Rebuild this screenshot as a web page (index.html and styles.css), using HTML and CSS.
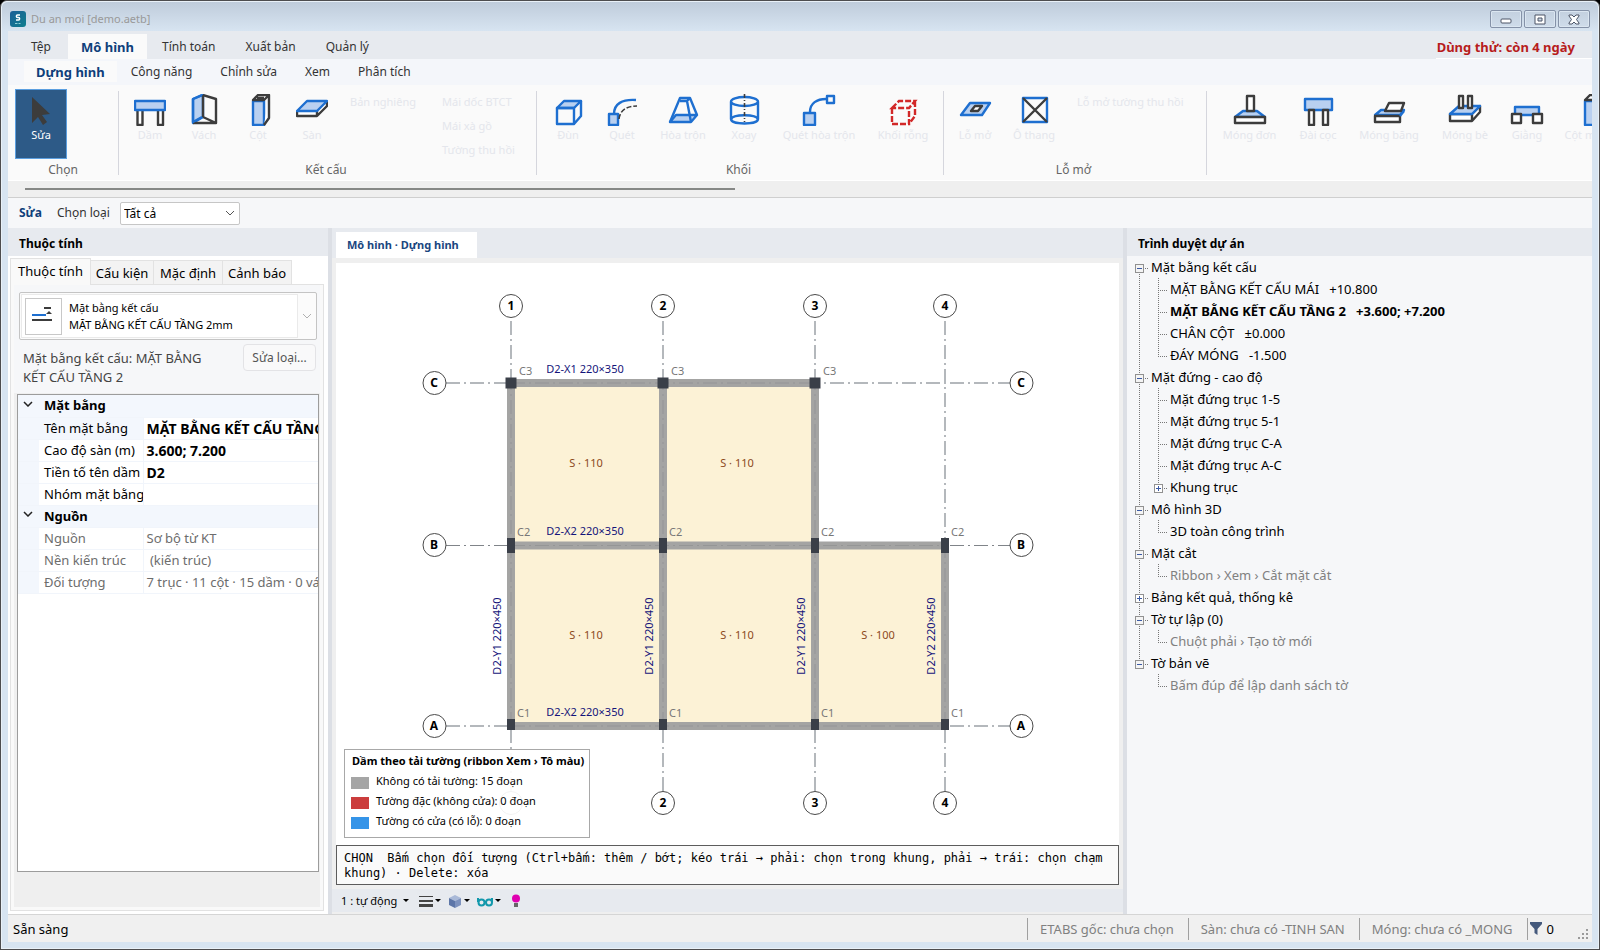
FILE: index.html
```html
<!DOCTYPE html>
<html lang="vi">
<head>
<meta charset="utf-8">
<title>Du an moi [demo.aetb]</title>
<link rel="stylesheet" href="styles.css">
</head>
<body>
<div class="window">
  <header class="titlebar">
    <svg class="app-logo" width="16" height="16" viewBox="0 0 16 16" aria-hidden="true">
      <defs><linearGradient id="lg" x1="0" y1="0" x2="1" y2="1"><stop offset="0" stop-color="#1c5f97"/><stop offset="1" stop-color="#0f7f8e"/></linearGradient></defs>
      <rect width="16" height="16" rx="3" fill="url(#lg)"/>
      <path d="M10 4H7.500C6 4 6 6.500 7.500 6.500H8.500C10 6.500 10 9 8.500 9H6" fill="none" stroke="#fff" stroke-width="1.500"/>
      <path d="M5 12.500h2.500M8.500 12.500h2" stroke="#8fd0d8"/>
    </svg>
    <h1 class="title">Du an moi [demo.aetb]</h1>
    <div class="caption-buttons">
      <button class="caption" type="button" aria-label="Minimize"><svg width="14" height="14" viewBox="0 0 14 14"><rect x="2" y="7" width="10" height="4" rx="1" fill="#fff" stroke="#4c5566"/></svg></button>
      <button class="caption" type="button" aria-label="Restore"><svg width="14" height="14" viewBox="0 0 14 14"><path d="M2 3h10v9H2zM5 6v3h4V6z" fill="#fff" fill-rule="evenodd" stroke="#4c5566"/></svg></button>
      <button class="caption" type="button" aria-label="Close"><svg width="14" height="14" viewBox="0 0 14 14"><path d="M2 3h3l2 2 2-2h3v1L9.500 7.500 12 11v1H9L7 10l-2 2H2v-1l2.500-3.500L2 4z" fill="#fff" stroke="#4c5566"/></svg></button>
    </div>
  </header>

  <main class="client">
    <nav class="tabs-main">
      <button class="tab first" type="button">Tệp</button>
      <button class="tab active" type="button">Mô hình</button>
      <button class="tab" type="button">Tính toán</button>
      <button class="tab" type="button">Xuất bản</button>
      <button class="tab" type="button">Quản lý</button>
      <strong class="trial">Dùng thử: còn 4 ngày</strong>
    </nav>
    <nav class="tabs-sub">
      <button class="subtab active" type="button">Dựng hình</button>
      <button class="subtab" type="button">Công năng</button>
      <button class="subtab" type="button">Chỉnh sửa</button>
      <button class="subtab" type="button">Xem</button>
      <button class="subtab" type="button">Phân tích</button>
    </nav>

    <div class="ribbon">
      <section class="group g-select">
        <div class="tools">
          <button class="tool selected" type="button">
            <svg width="32" height="32" viewBox="0 0 32 32"><path d="M7 3v26l6-6 5 8 4-3-5-7 8-1z" fill="#3c3c3c"/></svg>Sửa</button>
        </div>
        <h2>Chọn</h2>
      </section>
      <section class="group g-struct">
        <div class="tools">
          <button class="tool" type="button"><svg width="32" height="32" viewBox="0 0 32 32"><g class="dk"><rect x="3.500" y="15" width="5" height="16"/><rect x="24" y="15" width="5" height="16"/></g><rect class="bf" x="1" y="7" width="30" height="9"/></svg>Dầm</button>
          <button class="tool" type="button"><svg width="32" height="32" viewBox="0 0 32 32"><path class="bf" d="M5 5 15 1V23L5 29z"/><path class="dk n" d="M15 1 28 5V29L15 23M28 29H5M15 1V23"/><path class="b n" d="M14 1 5 5V28L14 23"/></svg>Vách</button>
          <button class="tool" type="button"><svg width="32" height="32" viewBox="0 0 32 32"><rect class="bf" x="11" y="7" width="11" height="24"/><path class="dk" d="M11 6 16 1H27L22 6zM15 4h7M27 1V24L22 31"/></svg>Cột</button>
          <button class="tool" type="button"><svg width="32" height="32" viewBox="0 0 32 32"><path class="dk" d="M1 17V22H21L31 12V7M21 17V22"/><path class="bf" d="M1 17 11 7H31L21 17z"/></svg>Sàn</button>
          <div class="stack"><button class="link" type="button">Bản nghiêng</button></div>
          <div class="stack"><button class="link" type="button">Mái dốc BTCT</button><button class="link" type="button">Mái xà gồ</button><button class="link" type="button">Tường thu hồi</button></div>
        </div>
        <h2>Kết cấu</h2>
      </section>
      <section class="group g-solid">
        <div class="tools">
          <button class="tool" type="button"><svg width="32" height="32" viewBox="0 0 32 32"><path class="bf" d="M5 14 12 7H29L22 14z"/><path class="b n" d="M5 14H22V30H5zM29 7V22L22 30"/></svg>Đùn</button>
          <button class="tool" type="button"><svg width="32" height="32" viewBox="0 0 32 32"><rect class="bf" x="3" y="20" width="9" height="11"/><path class="b n" d="M8 20C8 10 16 5 30 6"/><path class="dk n thin" stroke-dasharray="5 2" d="M13 25C14 16 21 12 31 12"/></svg>Quét</button>
          <button class="tool w68" type="button"><svg width="32" height="32" viewBox="0 0 32 32"><path class="bf" d="M3 28 9 21H30L24 28z"/><path class="b n" d="M3 28 13 4H23L30 21M24 28 20 7H13M20 7 23 4"/></svg>Hòa trộn</button>
          <button class="tool" type="button"><svg width="32" height="32" viewBox="0 0 32 32"><path class="b n" d="M3 8V25C3 31 30 31 30 25V8"/><ellipse class="b n" cx="16.500" cy="7.500" rx="13.500" ry="4.500"/><path class="b n" d="M3 25C5 20 28 20 30 25"/><path class="dk n thin" stroke-dasharray="4 2 1 2" d="M16.500 0V28"/></svg>Xoay</button>
          <button class="tool w96" type="button"><svg width="34" height="32" viewBox="0 0 34 32"><rect class="bf" x="2" y="19" width="11" height="12"/><path class="b n" d="M8 18C8 9 15 5 24 5"/><rect class="b n" x="25" y="2" width="7" height="7"/></svg>Quét hòa trộn</button>
          <button class="tool w72" type="button"><svg width="32" height="32" viewBox="0 0 32 32"><path d="M5 14 12 7H28L22 14zM5 14V30H22V14M28 7V22L22 30" fill="none" stroke="#d22828" stroke-width="2.400" stroke-dasharray="6 2"/></svg>Khối rỗng</button>
        </div>
        <h2>Khối</h2>
      </section>
      <section class="group g-open">
        <div class="tools">
          <button class="tool" type="button"><svg width="34" height="32" viewBox="0 0 34 32"><path class="bf" d="M3 21 12 9H32L24 21z"/><path class="dk" d="M13 17 17 12H24L20 17z"/></svg>Lỗ mở</button>
          <button class="tool w64" type="button"><svg width="32" height="32" viewBox="0 0 32 32"><rect class="b n" x="5" y="4" width="24" height="24"/><path class="dk n" d="M5 4 29 28M29 4 5 28"/></svg>Ô thang</button>
          <div class="stack"><button class="link" type="button">Lỗ mở tường thu hồi</button></div>
        </div>
        <h2>Lỗ mở</h2>
      </section>
      <section class="group g-found">
        <div class="tools">
          <button class="tool w77" type="button"><svg width="34" height="32" viewBox="0 0 34 32"><path class="bf" d="M2 23 10 17H24L32 23z"/><rect class="dk" x="2" y="23" width="30" height="6"/><rect class="dk" x="14" y="2" width="7" height="15"/></svg>Móng đơn</button>
          <button class="tool w60" type="button"><svg width="34" height="32" viewBox="0 0 34 32"><rect class="bf" x="4" y="5" width="27" height="11"/><rect class="dk" x="8" y="16" width="5" height="15"/><rect class="dk" x="22" y="16" width="5" height="15"/></svg>Đài cọc</button>
          <button class="tool w82" type="button"><svg width="34" height="32" viewBox="0 0 34 32"><path class="bf" d="M3 21 9 16H32L28 21z"/><path class="dk" d="M3 22H28V28H3zM13 17 17 9H32L29 17z"/><path class="b n" d="M28 22 32 17"/></svg>Móng băng</button>
          <button class="tool w70" type="button"><svg width="34" height="32" viewBox="0 0 34 32"><path class="dk" d="M2 20V27H24L32 18V12L24 20zM24 20V27"/><path class="bf" d="M2 20 11 12H32L24 20z"/><rect class="dk" x="11" y="2" width="4" height="12"/><rect class="dk" x="20" y="2" width="4" height="12"/></svg>Móng bè</button>
          <button class="tool" type="button"><svg width="34" height="32" viewBox="0 0 34 32"><rect class="bf" x="5" y="13" width="24" height="8"/><rect class="dk" x="2" y="20" width="9" height="9"/><rect class="dk" x="23" y="20" width="9" height="9"/></svg>Giằng</button>
          <button class="tool w72" type="button"><svg width="32" height="32" viewBox="0 0 32 32"><rect class="bf" x="11" y="7" width="11" height="24"/><path class="dk" d="M11 6 16 1H27L22 6zM27 1V24L22 31"/></svg>Cột móng</button>
        </div>
      </section>
    </div>
    <div class="ribbon-scroll"><div class="thumb"></div></div>

    <div class="optionbar">
      <strong>Sửa</strong>
      <label for="kind">Chọn loại</label>
      <select id="kind"><option>Tất cả</option></select>
    </div>

    <div class="workspace">
      <aside class="props">
        <h2 class="panel-head">Thuộc tính</h2>
        <div class="ptabs">
          <button class="ptab active" type="button">Thuộc tính</button>
          <button class="ptab w63" type="button">Cấu kiện</button>
          <button class="ptab" type="button">Mặc định</button>
          <button class="ptab" type="button">Cảnh báo</button>
        </div>
        <div class="page">
          <div class="type-area">
            <button class="type-picker" type="button">
              <span class="type-item">
                <span class="thumbnail"><svg width="24" height="20" viewBox="0 0 24 20"><path d="M0 14h20M12 2h7" stroke="#3c3c3c" stroke-width="2"/><path d="M0 9h14" stroke="#1e6fd0" stroke-width="2"/><path d="M14 8h6l-3-3z" fill="#3c3c3c"/></svg></span>
                <span class="type-text">Mặt bằng kết cấu<br>MẶT BẰNG KẾT CẤU TẦNG 2mm</span>
              </span>
              <svg class="chev" width="10" height="6" viewBox="0 0 10 6"><path d="M1 1l4 4 4-4" fill="none" stroke="#b0b0b0"/></svg>
            </button>
            <div class="type-row">
              <p>Mặt bằng kết cấu: MẶT BẰNG KẾT CẤU TẦNG 2</p>
              <button class="edit-type" type="button">Sửa loại...</button>
            </div>
          </div>
          <div class="grid-box">
            <table class="pgrid">
              <colgroup><col class="c0"><col class="c1"><col></colgroup>
              <tbody>
                <tr class="cat"><td><button type="button" aria-label="Thu gọn"><svg width="10" height="6" viewBox="0 0 10 6"><path d="M1 1l4 4 4-4" fill="none" stroke="#222" stroke-width="1.500"/></svg></button></td><th colspan="2">Mặt bằng</th></tr>
                <tr class="sel"><td></td><td>Tên mặt bằng</td><td class="v">MẶT BẰNG KẾT CẤU TẦNG 2</td></tr>
                <tr><td></td><td>Cao độ sàn (m)</td><td class="v">3.600; 7.200</td></tr>
                <tr><td></td><td>Tiền tố tên dầm</td><td class="v">D2</td></tr>
                <tr><td></td><td>Nhóm mặt bằng</td><td class="v"></td></tr>
                <tr class="cat"><td><button type="button" aria-label="Thu gọn"><svg width="10" height="6" viewBox="0 0 10 6"><path d="M1 1l4 4 4-4" fill="none" stroke="#222" stroke-width="1.500"/></svg></button></td><th colspan="2">Nguồn</th></tr>
                <tr class="ro"><td></td><td>Nguồn</td><td>Sơ bộ từ KT</td></tr>
                <tr class="ro"><td></td><td>Nền kiến trúc</td><td>&nbsp;(kiến trúc)</td></tr>
                <tr class="ro"><td></td><td>Đối tượng</td><td>7 trục · 11 cột · 15 dầm · 0 vách</td></tr>
              </tbody>
            </table>
          </div>
        </div>
      </aside>

      <section class="center">
        <div class="doc-tabs"><button class="doc-tab" type="button">Mô hình · Dựng hình</button></div>
        <div class="canvas-wrap">
          <svg class="plan" viewBox="336 263 783 582">
            <g fill="#fcf2d6">
              <path d="M511 383H815V545H945V726H511z"/>
            </g>
            <g class="axis">
              <path d="M511 791V318M663 791V318M815 791V318M945 791V318"/>
              <path d="M446 383H1010M446 726H1010"/><path class="ax-b" d="M446 545.500H1010"/>
            </g>
            <g class="beam">
              <path d="M511 383H815M511 545.500H945M511 726H945M511 383V726M663 383V726M815 383V726M945 545V726"/>
            </g>
            <g class="axis faint">
              <path d="M511 726V383M663 726V383M815 726V383M945 726V545M511 383H815M511 545.500H945M511 726H945"/>
            </g>
            <g fill="#3a3f48">
              <path d="M505.500 377.500h11v11h-11zM657.500 377.500h11v11h-11zM809.500 377.500h11v11h-11z"/>
              <path d="M507 538h8v15h-8zM659 538h8v15h-8zM811 538h8v15h-8zM941 538h8v15h-8z"/>
              <path d="M507 719h8v11h-8zM659 719h8v11h-8zM811 719h8v11h-8zM941 719h8v11h-8z"/>
            </g>
            <g class="bubble">
              <circle cx="511" cy="306" r="11.500"/><circle cx="663" cy="306" r="11.500"/><circle cx="815" cy="306" r="11.500"/><circle cx="945" cy="306" r="11.500"/>
              <circle cx="511" cy="803" r="11.500"/><circle cx="663" cy="803" r="11.500"/><circle cx="815" cy="803" r="11.500"/><circle cx="945" cy="803" r="11.500"/>
              <circle cx="434.500" cy="383" r="11.500"/><circle cx="434.500" cy="545" r="11.500"/><circle cx="434.500" cy="726" r="11.500"/>
              <circle cx="1021.500" cy="383" r="11.500"/><circle cx="1021.500" cy="545" r="11.500"/><circle cx="1021.500" cy="726" r="11.500"/>
            </g>
            <g class="mark">
              <text x="511" y="310">1</text><text x="663" y="310">2</text><text x="815" y="310">3</text><text x="945" y="310">4</text>
              <text x="663" y="807">2</text><text x="815" y="807">3</text><text x="945" y="807">4</text>
              <text x="434" y="387">C</text><text x="434" y="549">B</text><text x="434" y="730">A</text>
              <text x="1021" y="387">C</text><text x="1021" y="549">B</text><text x="1021" y="730">A</text>
            </g>
            <g class="col">
              <text x="519" y="375">C3</text><text x="671" y="375">C3</text><text x="823" y="375">C3</text>
              <text x="517" y="536">C2</text><text x="669" y="536">C2</text><text x="821" y="536">C2</text><text x="951" y="536">C2</text>
              <text x="517" y="717">C1</text><text x="669" y="717">C1</text><text x="821" y="717">C1</text><text x="951" y="717">C1</text>
            </g>
            <g class="bm">
              <text x="585" y="373">D2-X1 220×350</text><text x="585" y="535">D2-X2 220×350</text><text x="585" y="716">D2-X2 220×350</text>
              <text transform="translate(501 636) rotate(-90)">D2-Y1 220×450</text>
              <text transform="translate(653 636) rotate(-90)">D2-Y1 220×450</text>
              <text transform="translate(805 636) rotate(-90)">D2-Y1 220×450</text>
              <text transform="translate(935 636) rotate(-90)">D2-Y2 220×450</text>
            </g>
            <g class="slab">
              <text x="586" y="467">S · 110</text><text x="737" y="467">S · 110</text>
              <text x="586" y="639">S · 110</text><text x="737" y="639">S · 110</text><text x="878" y="639">S · 100</text>
            </g>
          </svg>
          <div class="legend">
            <h3>Dầm theo tải tường (ribbon Xem › Tô màu)</h3>
            <ul>
              <li><i class="sw gray"></i>Không có tải tường: 15 đoạn</li>
              <li><i class="sw red"></i>Tường đặc (không cửa): 0 đoạn</li>
              <li><i class="sw blue"></i>Tường có cửa (có lỗ): 0 đoạn</li>
            </ul>
          </div>
        </div>
        <p class="command">CHỌN  Bấm chọn đối tượng (Ctrl+bấm: thêm / bớt; kéo trái → phải: chọn trong khung, phải → trái: chọn chạm khung) · Delete: xóa</p>
        <div class="viewbar">
          <button class="scale" type="button">1 : tự động <i class="dd"></i></button>
          <button type="button" aria-label="Nét"><svg width="14" height="14" viewBox="0 0 14 14"><path d="M0 2.500h14" stroke="#444"/><path d="M0 7h14" stroke="#444" stroke-width="2"/><path d="M0 11.500h14" stroke="#444" stroke-width="3"/></svg><i class="dd"></i></button>
          <button type="button" aria-label="Hiển thị"><svg width="14" height="14" viewBox="0 0 14 14"><path d="M7 1l6 3-6 3-6-3z" fill="#a9b9d8"/><path d="M1 4l6 3v7l-6-3z" fill="#5d76a8"/><path d="M13 4L7 7v7l6-3z" fill="#7d92be"/></svg><i class="dd"></i></button>
          <button type="button" aria-label="Ẩn hiện"><svg width="16" height="14" viewBox="0 0 16 14"><g fill="none" stroke="#1298ac" stroke-width="2"><circle cx="4.500" cy="8.500" r="3"/><circle cx="12" cy="8.500" r="3"/><path d="M1 8V4M7 8h2M15 8V4"/></g></svg><i class="dd"></i></button>
          <button class="bulb" type="button" aria-label="Bật sáng"><svg width="10" height="14" viewBox="0 0 10 14"><circle cx="5" cy="4.500" r="4" fill="#e000b0"/><path d="M3 9h4v4H3z" fill="#666"/></svg></button>
        </div>
      </section>

      <aside class="browser">
        <h2 class="panel-head">Trình duyệt dự án</h2>
        <ul class="tree">
          <li><b class="node first open"><button type="button" aria-label="Thu gọn"></button></b>Mặt bằng kết cấu</li>
          <li><b class="rail"></b><b class="leaf"></b><span>MẶT BẰNG KẾT CẤU MÁI   +10.800</span></li>
          <li><b class="rail"></b><b class="leaf"></b><strong>MẶT BẰNG KẾT CẤU TẦNG 2   +3.600; +7.200</strong></li>
          <li><b class="rail"></b><b class="leaf"></b><span>CHÂN CỘT   ±0.000</span></li>
          <li><b class="rail"></b><b class="leaf end"></b><span>ĐÁY MÓNG   -1.500</span></li>
          <li><b class="node open"><button type="button" aria-label="Thu gọn"></button></b>Mặt đứng - cao độ</li>
          <li><b class="rail"></b><b class="leaf"></b>Mặt đứng trục 1-5</li>
          <li><b class="rail"></b><b class="leaf"></b>Mặt đứng trục 5-1</li>
          <li><b class="rail"></b><b class="leaf"></b>Mặt đứng trục C-A</li>
          <li><b class="rail"></b><b class="leaf"></b>Mặt đứng trục A-C</li>
          <li><b class="rail"></b><b class="node last"><button type="button" aria-label="Mở rộng"></button></b>Khung trục</li>
          <li><b class="node open"><button type="button" aria-label="Thu gọn"></button></b>Mô hình 3D</li>
          <li><b class="rail"></b><b class="leaf end"></b>3D toàn công trình</li>
          <li><b class="node open"><button type="button" aria-label="Thu gọn"></button></b>Mặt cắt</li>
          <li class="hint"><b class="rail"></b><b class="leaf end"></b>Ribbon › Xem › Cắt mặt cắt</li>
          <li><b class="node"><button type="button" aria-label="Mở rộng"></button></b>Bảng kết quả, thống kê</li>
          <li><b class="node open"><button type="button" aria-label="Thu gọn"></button></b>Tờ tự lập (0)</li>
          <li class="hint"><b class="rail"></b><b class="leaf end"></b>Chuột phải › Tạo tờ mới</li>
          <li><b class="node last open"><button type="button" aria-label="Thu gọn"></button></b>Tờ bản vẽ</li>
          <li class="hint"><b class="rail off"></b><b class="leaf end"></b>Bấm đúp để lập danh sách tờ</li>
        </ul>
      </aside>
    </div>

    <footer class="status">
      <span class="ready">Sẵn sàng</span>
      <span class="cell">ETABS gốc: chưa chọn</span>
      <span class="cell">Sàn: chưa có -TINH SAN</span>
      <span class="cell">Móng: chưa có _MONG</span>
      <button class="filter" type="button"><svg width="12" height="13" viewBox="0 0 12 13"><path d="M0 0h12v2L7.500 7v6L4.500 11V7L0 2z" fill="#44597c"/></svg>0</button>
      <svg class="grip" width="12" height="12" viewBox="0 0 12 12"><path d="M8 0h2v2H8zM8 4h2v2H8zM4 4h2v2H4zM8 8h2v2H8zM4 8h2v2H4zM0 8h2v2H0z" fill="#9a9a9a"/></svg>
    </footer>
  </main>
</div>
</body>
</html>
```
FILE: styles.css
```css
* { box-sizing: border-box; }
html, body { height: 100%; }
body {
  margin: 0;
  background: #000;
  font: 13px/22px "Noto Sans", "Open Sans", sans-serif;
  color: #000;
}
button, select { font: inherit; color: inherit; }
button { margin: 0; padding: 0; border: 0; background: none; white-space: nowrap; }
h1, h2, h3, p, ul { margin: 0; padding: 0; list-style: none; font-weight: normal; }
i, b { font-style: normal; font-weight: normal; }
svg { display: block; flex: none; }

.window {
  display: flex;
  flex-direction: column;
  height: 100vh;
  padding: 0 7px 7px 7px;
  border: 1px solid #4d4d4f;
  border-radius: 7px 7px 0 0;
  background: #d7e4f1;
  box-shadow: inset 0 0 0 1px #e9f1f8;
}
.titlebar {
  display: flex;
  align-items: center;
  flex: none;
  height: 30px;
  margin: 0 -6px;
  padding: 4px 8px 0;
  border-top: 1px solid #e9f1f8;
  border-radius: 6px 6px 0 0;
  background: linear-gradient(#bfccdb, #d7e4f1);
}
.title { margin-left: 5px; font-size: 11px; color: #999; line-height: 20px; }
.caption-buttons { display: flex; gap: 2px; margin-left: auto; }
.caption {
  display: flex;
  align-items: center;
  justify-content: center;
  width: 32px;
  height: 18px;
  border: 1px solid #8592a8;
  border-radius: 2px;
  background: linear-gradient(#c3d0df, #cfdcea);
  box-shadow: inset 0 0 0 1px #dbe6f1;
}
.client { display: flex; flex-direction: column; flex: 1; min-height: 0; background: #f6f7f9; }

.tabs-main { display: flex; align-items: flex-end; flex: none; height: 28px; padding-left: 6px; background: #e7eaef; }
.tab { height: 25px; padding: 0 15px; font-size: 12px; color: #333; }
.tab.first { width: 54px; padding: 0; }
.tab.active { padding: 0 13px; background: #fafafa; color: #0f3f7a; font-size: 13px; font-weight: bold; }
.trial { height: 25px; margin-left: auto; padding: 0 17px 0 1px; color: #b71c1c; border-bottom: 1px solid #fff; line-height: 26px; }
.tabs-sub { display: flex; align-items: flex-start; flex: none; height: 26px; padding: 2px 0 0 16px; background: #f4f6fa; }
.subtab { height: 21px; padding: 0 14px; font-size: 12px; color: #333; }
.subtab.active { padding: 0 12px; background: #fafafa; color: #0f3f7a; font-size: 13px; font-weight: bold; }

.ribbon { display: flex; flex: none; height: 96px; overflow: hidden; background: #fafafa; border-bottom: 1px solid #fff; }
.group { display: flex; flex-direction: column; flex: none; padding: 4px 0 0 4px; background: linear-gradient(#d5d6dd, #d5d6dd) no-repeat right 6px / 1px 84px; }
.g-select { width: 111px; padding-left: 7px; }
.g-struct { width: 418px; }
.g-solid { width: 407px; }
.g-open { width: 263px; }
.g-found { width: 640px; background: none; }
.group h2 { padding-right: 8px; font-size: 12px; line-height: 18px; color: #666; text-align: center; }
.tools { display: flex; flex: none; height: 72px; padding-bottom: 2px; font-size: 11px; color: #e4e6ec; }
.tool { display: flex; flex-direction: column; align-items: center; flex: none; width: 54px; padding-top: 5px; line-height: 18px; }
.tool.selected { width: 52px; padding-top: 4px; border: 1px solid #5b9fe0; background: #2d5a87; color: #fff; }
.w60 { width: 60px; } .w64 { width: 64px; } .w68 { width: 68px; } .w70 { width: 70px; }
.w72 { width: 72px; } .w77 { width: 77px; } .w82 { width: 82px; } .w96 { width: 96px; }
.stack { display: flex; flex-direction: column; align-items: flex-start; flex: none; width: 92px; padding: 1px 0 0 11px; }
.link { flex: none; height: 24px; line-height: 24px; }
.dk { fill: #fff; stroke: #3c3c3c; stroke-width: 2.4; stroke-linejoin: round; }
.bf { fill: #b9d0f0; stroke: #1e6fd0; stroke-width: 2.4; stroke-linejoin: round; }
.b { stroke: #1e6fd0; stroke-width: 2.4; stroke-linejoin: round; }
.n { fill: none; }
.thin { stroke-width: 1.6; }
.ribbon-scroll { flex: none; height: 17px; padding: 7px 0 0 17px; background: #efefef; border-bottom: 1px solid #cfcfcf; }
.thumb { width: 45.3%; height: 2px; background: #868886; }

.optionbar { display: flex; align-items: center; flex: none; height: 30px; padding-left: 11px; font-size: 12px; color: #333; }
.optionbar strong { color: #0f3f7a; }
.optionbar label { margin: 0 10px 0 15px; }
.optionbar select {
  width: 120px;
  height: 23px;
  padding: 0 3px;
  border: 1px solid #c6c6c6;
  border-radius: 2px;
  appearance: none;
  color: #000;
  background: #fff url("data:image/svg+xml,%3Csvg xmlns='http://www.w3.org/2000/svg' width='10' height='6'%3E%3Cpath d='M1 1l4 4 4-4' fill='none' stroke='%23555'/%3E%3C/svg%3E") no-repeat right 4px center;
}

.workspace { display: grid; grid-template-columns: 320px minmax(0, 1fr) 465px; flex: 1; min-height: 0; }
.panel-head { flex: none; height: 28px; padding-left: 11px; background: #e7eaef; font-size: 12px; font-weight: bold; line-height: 31px; }

.props { display: flex; flex-direction: column; min-height: 0; padding-bottom: 3px; background: #fff; }
.ptabs { display: flex; align-items: flex-end; flex: none; height: 28px; padding-left: 2px; }
.ptab { width: 69px; height: 24px; border: 1px solid #e2e2e2; border-left: 0; border-bottom: 0; background: #f3f3f3; }
.ptab.w63 { width: 63px; }
.ptab.active { position: relative; width: 81px; height: 27px; margin-bottom: -1px; padding-bottom: 3px; border-left: 1px solid #e2e2e2; background: #f9f9f9; z-index: 1; }
.page { display: flex; flex-direction: column; flex: 1; min-height: 0; margin: 0 4px 0 2px; padding: 0 4px 38px; border: 1px solid #e2e2e2; background: #efefef; box-shadow: inset 0 0 0 3px #f9f9f9; }
.type-area { margin: 0 -1px; padding: 7px 2px 3px 5px; background: #f6f7f9; }
.type-picker { display: flex; align-items: center; justify-content: space-between; width: 298px; height: 48px; padding: 1px 4px 1px 1px; border: 1px solid #c4c4c4; border-radius: 2px; background: #fbfbfb; text-align: left; }
.type-item { display: flex; align-items: center; width: 277px; height: 44px; padding-left: 3px; border: 1px solid #eaeaea; background: #fff; }
.thumbnail { display: flex; align-items: center; justify-content: center; width: 37px; height: 37px; border: 1px solid #c8c8c8; }
.type-text { margin-left: 7px; font-size: 11px; line-height: 17px; }
.type-row { display: flex; align-items: flex-start; justify-content: space-between; padding: 4px 2px 0 4px; color: #444; }
.type-row p { width: 200px; padding: 5px 0 3px; line-height: 19px; }
.edit-type { width: 73px; height: 27px; border: 1px solid #e3e3e6; border-radius: 4px; background: #f9f9fa; font-size: 12px; color: #555; }
.grid-box { flex: 1; min-height: 0; overflow: hidden; margin: 1px 0 0 2px; border: 1px solid #9c9c9c; background: #fff; }
.pgrid { width: 100%; table-layout: fixed; border-collapse: collapse; }
.c0 { width: 21px; } .c1 { width: 104px; }
.pgrid tr { height: 22px; }
.pgrid td, .pgrid th { height: 22px; padding: 0 0 0 5px; overflow: hidden; white-space: nowrap; text-align: left; line-height: 21px; border-bottom: 1px solid #f1f5fb; }
.pgrid td:nth-child(3) { padding-left: 3px; border-left: 1px solid #f1f5fb; }
.pgrid td:first-child { background: #f3f7fd; text-align: center; }
.pgrid .cat > * , .pgrid .sel td:nth-child(2) { background: #f3f7fd; }
.pgrid .cat button { display: block; padding-bottom: 4px; }
.pgrid .v { font-size: 14px; font-weight: bold; }
.ro { color: #6d6d6d; }

.center { display: flex; flex-direction: column; min-width: 0; min-height: 0; padding-bottom: 2px; border: solid #dcdfe5; border-width: 0 4px; background: #efefef; }
.doc-tabs { display: flex; align-items: flex-end; flex: none; height: 30px; padding-left: 4px; background: #e7eaef; }
.doc-tab { height: 26px; padding: 0 18px 1px 11px; background: #fff; color: #1a4680; font-size: 11px; font-weight: bold; }
.canvas-wrap { position: relative; flex: 1; min-height: 0; margin: 5px 4px 0; background: #fff; }
.plan { width: 100%; height: 100%; font-size: 11px; }
.axis { fill: none; stroke: #b4b8bc; stroke-width: 2; stroke-dasharray: 14 4 2 4; }
.axis .ax-b { stroke: #808489; stroke-width: 1; }
.axis.faint { stroke: #5c6066; stroke-width: 1; opacity: .2; }
.beam { fill: none; stroke: #a4a4a3; stroke-width: 8; }
.bubble { fill: #fff; stroke: #4a4a4a; }
.mark { text-anchor: middle; font-weight: bold; font-size: 12px; }
.col { fill: #777; }
.bm { fill: #14147a; text-anchor: middle; }
.slab { fill: #8c4a1c; text-anchor: middle; }
.legend { position: absolute; left: 8px; bottom: 7px; width: 246px; height: 89px; padding: 1px 7px; border: 1px solid #a8a8a8; background: rgba(255, 255, 255, .93); font-size: 11px; line-height: 20px; }
.legend h3 { font-size: 11px; font-weight: bold; white-space: nowrap; }
.legend li { display: flex; align-items: center; white-space: nowrap; }
.sw { width: 18px; height: 12px; margin: 3px 7px 0 -1px; }
.gray { background: #a5a5a5; } .red { background: #cb3d3d; } .blue { background: #3594e8; }
.command { flex: none; height: 40px; margin: 0 4px; padding: 5px 7px; border: 1px solid #5c5c5c; background: #fafafa; font: 12px/15px "DejaVu Sans Mono", "Liberation Mono", monospace; white-space: pre-wrap; }
.viewbar { display: flex; align-items: center; gap: 7px; flex: none; height: 23px; margin-top: 4px; padding-left: 9px; background: #e7eaef; }
.viewbar button { display: flex; align-items: center; gap: 2px; }
.viewbar .scale { gap: 6px; margin-right: 3px; font-size: 11px; }
.bulb { margin-left: 3px; }
.dd { border: 3px solid transparent; border-top-color: #000; border-bottom: 0; }

.browser { min-height: 0; overflow: hidden; }
.tree { padding-left: 8px; }
.tree li { display: flex; height: 22px; white-space: pre; }
.hint { color: #808080; }
.tree b { flex: none; height: 22px; --dot: repeating-linear-gradient(#777 0 1px, transparent 1px 2px); --hdot: repeating-linear-gradient(90deg, #777 0 1px, transparent 1px 2px); }
.rail { width: 19px; background: var(--dot) no-repeat 4px 0 / 1px 22px; }
.rail.off { background: none; }
.leaf { width: 16px; background: var(--dot) no-repeat 4px 0 / 1px 22px, var(--hdot) no-repeat 4px 12px / 9px 1px; }
.leaf.end { background: var(--dot) no-repeat 4px 0 / 1px 13px, var(--hdot) no-repeat 4px 12px / 9px 1px; }
.node { display: flex; align-items: center; width: 16px; background: var(--dot) no-repeat 4px 0 / 1px 22px, var(--hdot) no-repeat 4px 12px / 9px 1px; }
.node.first { background: var(--dot) no-repeat 4px 12px / 1px 10px, var(--hdot) no-repeat 4px 12px / 9px 1px; }
.node.last { background: var(--dot) no-repeat 4px 0 / 1px 12px, var(--hdot) no-repeat 4px 12px / 9px 1px; }
.node button { width: 9px; height: 9px; margin-top: 3px; border: 1px solid #919191; background: linear-gradient(#3b5aa5, #3b5aa5) no-repeat center / 5px 1px, linear-gradient(#3b5aa5, #3b5aa5) no-repeat center / 1px 5px, #fff; }
.node.open button { background: linear-gradient(#3b5aa5, #3b5aa5) no-repeat center / 5px 1px, #f4f4f4; }

.status { display: flex; align-items: center; flex: none; height: 28px; padding-left: 5px; border-top: 1px solid #d5d5d5; background: #f0f0f0; }
.ready { margin-right: auto; }
.cell { height: 22px; padding: 0 14px 0 12px; border-left: 1px solid #a0a0a0; color: #808080; }
.filter { display: flex; align-items: center; gap: 5px; height: 22px; padding-left: 2px; border-left: 1px solid #a0a0a0; }
.grip { align-self: flex-end; margin: 0 2px 1px 24px; }
```
